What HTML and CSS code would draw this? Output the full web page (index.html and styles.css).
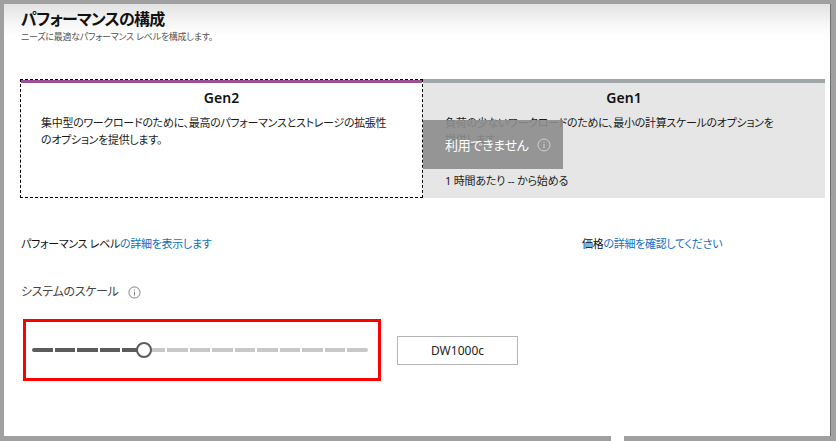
FILE: index.html
```html
<!DOCTYPE html>
<html lang="ja">
<head>
<meta charset="utf-8">
<link rel="stylesheet" href="styles.css">
</head>
<body>
<div class="panel">
  <header class="head">
    <h1 class="title">パフォーマンスの構成</h1>
    <p class="subtitle">ニーズに最適なパフォーマンス レベルを構成します。</p>
  </header>

  <div class="cards">
    <div class="card card-gen2">
      <h2 class="card-title">Gen2</h2>
      <p class="card-desc">集中型のワークロードのために、最高のパフォーマンスとストレージの拡張性<br>のオプションを提供します。</p>
    </div>
    <div class="card card-gen1">
      <h2 class="card-title">Gen1</h2>
      <p class="card-desc">負荷の少ないワークロードのために、最小の計算スケールのオプションを<br>提供します。</p>
      <p class="card-price">1 時間あたり -- から始める</p>
      <div class="unavailable">利用できません
        <svg class="info info-light" viewBox="0 0 14 14" width="14" height="14"><circle cx="7" cy="7" r="6" fill="none" stroke="currentColor" stroke-width="1"/><rect x="6.5" y="6" width="1" height="4.2" fill="currentColor"/><rect x="6.5" y="3.7" width="1" height="1.1" fill="currentColor"/></svg>
      </div>
    </div>
  </div>

  <div class="links">
    <p class="link-line">パフォーマンス レベル<a class="link" href="#">の詳細を表示します</a></p>
    <p class="link-line">価格<a class="link" href="#">の詳細を確認してください</a></p>
  </div>

  <div class="scale-label">システムのスケール
    <svg class="info" viewBox="0 0 14 14" width="13" height="13"><circle cx="7" cy="7" r="6" fill="none" stroke="currentColor" stroke-width="1"/><rect x="6.5" y="6" width="1" height="4.2" fill="currentColor"/><rect x="6.5" y="3.7" width="1" height="1.1" fill="currentColor"/></svg>
  </div>

  <div class="scale-row">
    <div class="slider-box">
      <div class="slider">
        <div class="track">
          <span class="seg on"></span><span class="seg on"></span><span class="seg on"></span><span class="seg on"></span><span class="seg on"></span>
          <span class="seg"></span><span class="seg"></span><span class="seg"></span><span class="seg"></span><span class="seg"></span>
          <span class="seg"></span><span class="seg"></span><span class="seg"></span><span class="seg"></span><span class="seg"></span>
        </div>
        <span class="thumb"></span>
      </div>
    </div>
    <div class="value-box">DW1000c</div>
  </div>
</div>
<div class="notch"></div>
</body>
</html>
```

FILE: styles.css
```css
* { box-sizing: border-box; }
html, body { margin: 0; padding: 0; }
body {
  width: 836px;
  height: 441px;
  background: #a0a0a0;
  padding: 4px 5px 5px 4px;
  font-family: "Noto Sans", "Noto Sans CJK JP", sans-serif;
  font-feature-settings: "palt";
  color: #000;
  position: relative;
  overflow: hidden;
}
.panel {
  height: 432px;
  background: linear-gradient(#e2e2e2 0, #f7f7f7 20px, #fff 32px);
  border-right: 1px solid #6e6e6e;
  padding: 0 6px 0 16px;
}
.head { padding: 4px 0 0 1px; height: 75px; }
.title {
  margin: 0;
  font-size: 16px;
  letter-spacing: -0.7px;
  line-height: 22px;
  font-weight: 700;
  color: #111;
}
.subtitle {
  margin: 1px 0 0;
  font-size: 9px;
  letter-spacing: -0.25px;
  line-height: 12px;
  color: #555;
}
.cards {
  display: flex;
  height: 119px;
}
.card {
  position: relative;
  flex: 0 0 auto;
  white-space: nowrap;
}
.card-gen2 {
  width: 403px;
  border: 1px dashed #000;
  background: #fff;
  padding: 3px 20px 0;
}
.card-gen2::before {
  content: "";
  display: block;
  position: absolute;
  left: 0; right: 0; top: 0;
  height: 3px;
  background: #9c4f97;
}
.card-gen1 {
  width: 402px;
  background: #e6e6e6;
  border-top: 4px solid #a1a6a9;
  padding: 0 22px;
}
.card-title {
  margin: 5px 0 0;
  text-align: center;
  font-size: 14px;
  line-height: 20px;
  font-weight: 600;
  color: #111;
}
.card-gen2 .card-title { margin-top: 5px; }
.card-desc {
  margin: 6px 0 0;
  font-size: 11px;
  letter-spacing: -0.3px;
  line-height: 17px;
  color: #1a1a1a;
}
.card-price {
  margin: 25px 0 0;
  font-size: 11px;
  letter-spacing: -0.2px;
  line-height: 16px;
  color: #222;
}
.unavailable {
  position: absolute;
  left: 0;
  top: 37px;
  width: 140px;
  height: 49px;
  background: rgba(140, 140, 140, 0.9);
  color: #fff;
  font-size: 13px;
  letter-spacing: -0.3px;
  display: flex;
  align-items: center;
  gap: 8px;
  padding-left: 22px;
}
.info { color: #777; vertical-align: middle; }
.info-light { color: #cfcfcf; }
.links {
  display: grid;
  grid-template-columns: 561px 1fr;
  margin-top: 38px;
  padding-left: 1px;
}
.link-line {
  margin: 0;
  font-size: 11px;
  letter-spacing: -0.3px;
  line-height: 16px;
  color: #111;
}
.link { color: #0f6fc6; text-decoration: none; }
.scale-label {
  margin-top: 32px;
  padding-left: 1px;
  font-size: 12px;
  letter-spacing: -0.3px;
  line-height: 16px;
  color: #444;
  display: flex;
  align-items: center;
  gap: 9px;
}
.scale-row {
  display: flex;
  align-items: center;
  gap: 16px;
  margin-top: 19px;
  padding-left: 3px;
}
.slider-box {
  width: 358px;
  height: 62px;
  border: 3px solid #f00;
  padding: 0 10px 0 6px;
  display: flex;
  align-items: center;
}
.slider {
  position: relative;
  width: 336px;
  height: 14px;
  display: flex;
  align-items: center;
}
.track {
  display: flex;
  gap: 2px;
  width: 100%;
}
.seg {
  flex: 1 1 0;
  height: 4px;
  background: #c8c8c8;
}
.seg.on { background: #5c5c5c; }
.seg:first-child { border-radius: 2px 0 0 2px; }
.seg:last-child { border-radius: 0 2px 2px 0; }
.thumb {
  position: absolute;
  left: 104px;
  top: -1px;
  width: 16px;
  height: 16px;
  border-radius: 50%;
  background: #fff;
  border: 2px solid #5c5c5c;
}
.value-box {
  width: 121px;
  height: 29px;
  border: 1px solid #b5b5b5;
  display: flex;
  align-items: center;
  justify-content: center;
  font-size: 12px;
  color: #222;
}
.notch {
  position: absolute;
  left: 611px;
  top: 436px;
  width: 13px;
  height: 5px;
  background: #fff;
}
```
